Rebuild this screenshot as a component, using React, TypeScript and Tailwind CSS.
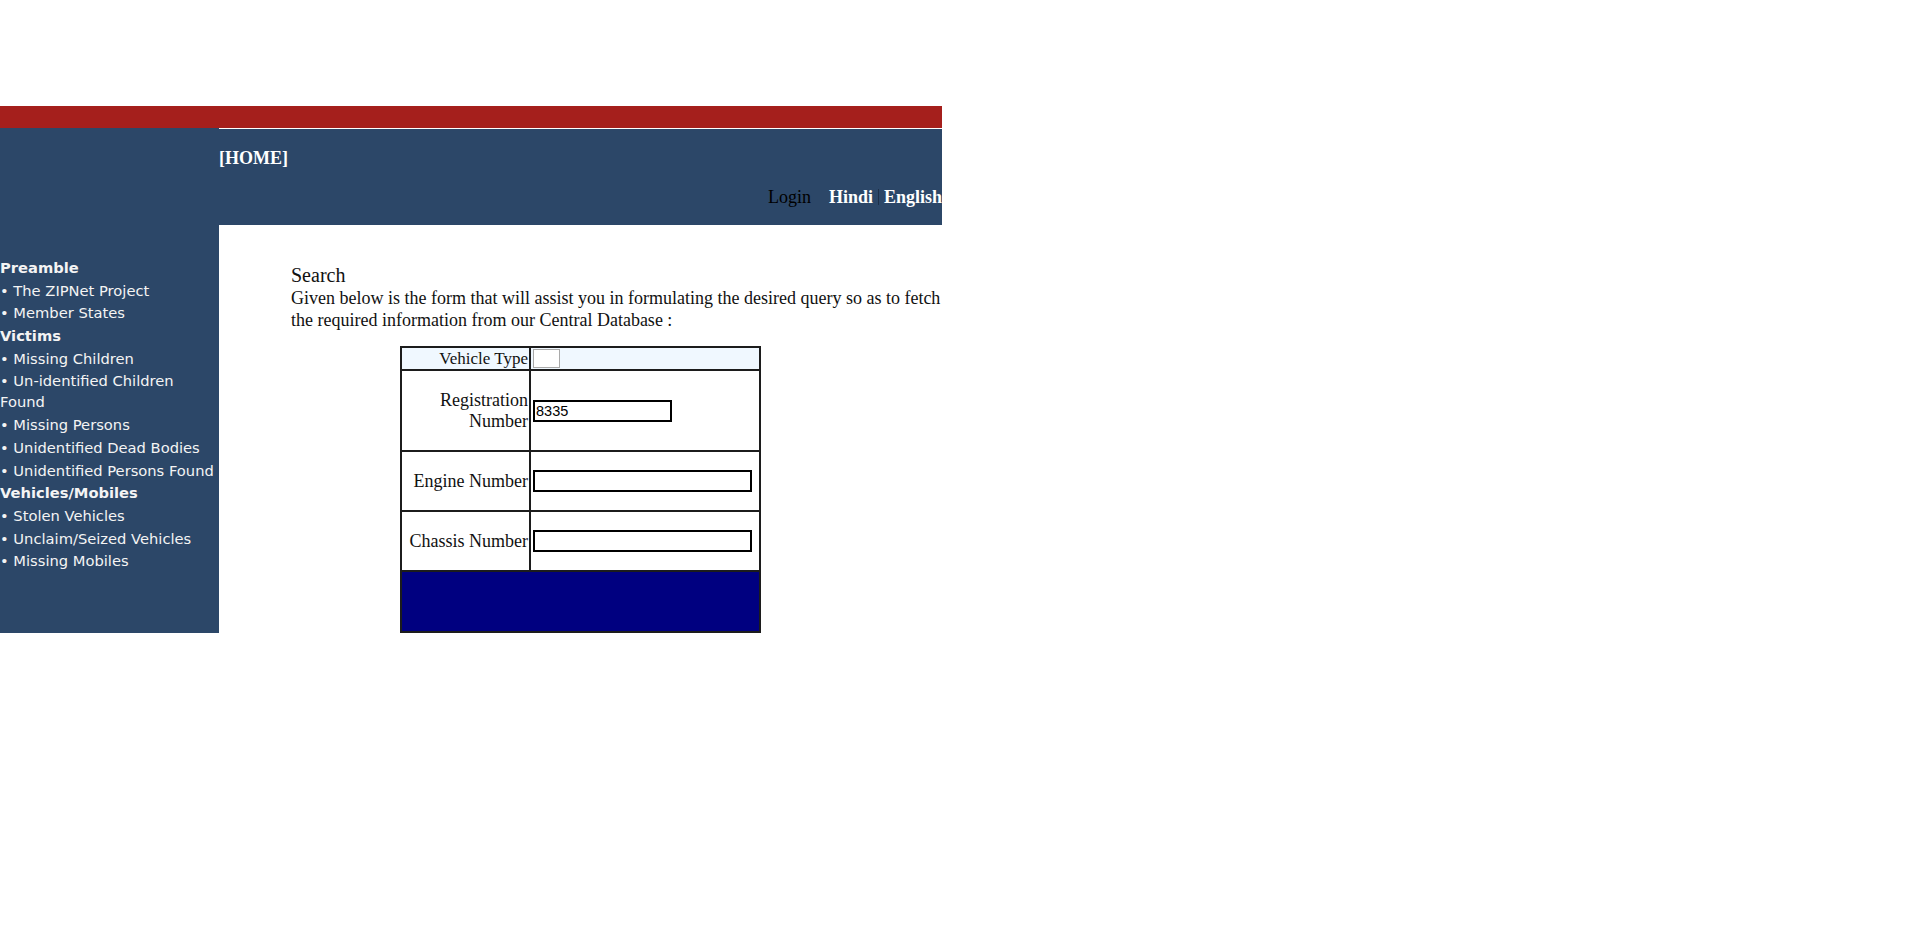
import React from "react"

type NavItem = {
    label: string;
    heading?: boolean;
}

const navItems: NavItem[] = [
    { label: "Preamble", heading: true },
    { label: "• The ZIPNet Project" },
    { label: "• Member States" },
    { label: "Victims", heading: true },
    { label: "• Missing Children" },
    { label: "• Un-identified Children Found" },
    { label: "• Missing Persons" },
    { label: "• Unidentified Dead Bodies" },
    { label: "• Unidentified Persons Found" },
    { label: "Vehicles/Mobiles", heading: true },
    { label: "• Stolen Vehicles" },
    { label: "• Unclaim/Seized Vehicles" },
    { label: "• Missing Mobiles" },
]

const Sidebar: React.FC = () => {
    return (
        <div className="w-[219px] shrink-0 bg-[#2c4768] pt-[129px] font-['DejaVu_Sans',sans-serif] text-[14.7px] leading-[21px] text-[#f4f4f4]">
            {navItems.map((item) => (
                <div key={item.label} className={item.heading ? "mb-[1.7px] font-bold" : "mb-[1.7px]"}>
                    {item.label}
                </div>
            ))}
        </div>
    )
}

const SearchForm: React.FC = () => {
    return (
        <div className="mx-auto mt-[15px] w-[361px] border-2 border-[#1c1c1c] text-[18px] text-[#111]">
            <div className="flex h-[23px] border-b-2 border-[#1c1c1c] bg-[#f0f8ff]">
                <div className="flex w-[127px] items-end justify-end pr-[1px] text-[17px] leading-[20px]">Vehicle Type</div>
                <div className="w-[230px] border-l-2 border-[#1c1c1c] pl-[2px] pt-[1px]">
                    <div className="h-[19px] w-[27px] border border-[#a9a9a9] bg-white" />
                </div>
            </div>
            <div className="flex h-[81px] border-b-2 border-[#1c1c1c]">
                <div className="flex w-[127px] items-center justify-end pr-[1px] text-right leading-[21px]">
                    Registration<br />Number
                </div>
                <div className="flex w-[230px] items-center border-l-2 border-[#1c1c1c] pl-[2px]">
                    <input
                        defaultValue="8335"
                        className="h-[22px] w-[139px] border-2 border-black bg-white px-[1px] font-['Liberation_Sans',sans-serif] text-[14.5px] text-black outline-none"
                    />
                </div>
            </div>
            <div className="flex h-[60px] border-b-2 border-[#1c1c1c]">
                <div className="flex w-[127px] items-center justify-end pr-[1px]">Engine Number</div>
                <div className="flex w-[230px] items-center border-l-2 border-[#1c1c1c] pl-[2px]">
                    <input className="h-[22px] w-[219px] border-2 border-black bg-white outline-none" />
                </div>
            </div>
            <div className="flex h-[60px] border-b-2 border-[#1c1c1c]">
                <div className="flex w-[127px] items-center justify-end pr-[1px]">Chassis Number</div>
                <div className="flex w-[230px] items-center border-l-2 border-[#1c1c1c] pl-[2px]">
                    <input className="h-[22px] w-[219px] border-2 border-black bg-white outline-none" />
                </div>
            </div>
            <div className="h-[59px] bg-[#000080]" />
        </div>
    )
}

export default function App() {
    return (
        <div className="min-h-screen bg-white font-['Liberation_Serif',serif]">
            <div className="h-[106px]" />
            <div className="w-[942px]">
                <div className="h-[22px] bg-[#a51f1c]" />
                <div className="flex">
                    <Sidebar />
                    <div className="flex flex-1 flex-col">
                        <div className="h-[97px] border-t border-white bg-[#2c4768] pt-[19px]">
                            <div className="text-[18px] font-bold leading-[20px] text-white">[HOME]</div>
                            <div className="mt-[19px] flex items-center justify-end text-[18px] leading-[20px]">
                                <span className="mr-[18px] text-black">Login</span>
                                <span className="font-bold text-white">Hindi</span>
                                <span className="mx-[5px] h-[16px] border-l border-[#1d2f48]" />
                                <span className="font-bold text-white">English</span>
                            </div>
                        </div>
                        <div className="pt-[39px]">
                            <div className="pl-[72px] text-[#111]">
                                <div className="text-[20px] leading-[23px]">Search</div>
                                <p className="text-[18px] leading-[22px]">
                                    Given below is the form that will assist you in formulating the desired query so as to fetch the required information from our Central Database :
                                </p>
                            </div>
                            <SearchForm />
                        </div>
                    </div>
                </div>
            </div>
        </div>
    )
}
